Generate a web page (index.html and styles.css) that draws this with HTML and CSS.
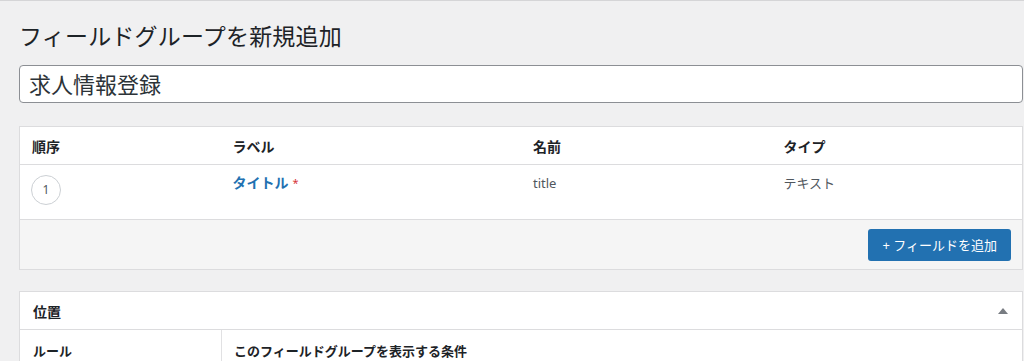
FILE: index.html
```html
<html>
    <head>
        <meta charset="utf-8">
        <link rel="stylesheet" href="styles.css">
    </head>

    <body>
        <div id="wrap">
            <h1 class="page-title">フィールドグループを新規追加</h1>

            <!-- タイトル入力 -->
            <div class="title-input">求人情報登録</div>

            <!-- フィールド一覧 -->
            <div class="fields-box">
                <div class="fields-row fields-head">
                    <div class="cell">順序</div>
                    <div class="cell">ラベル</div>
                    <div class="cell">名前</div>
                    <div class="cell">タイプ</div>
                </div>
                <div class="fields-row fields-item">
                    <div class="cell"><span class="order-num">1</span></div>
                    <div class="cell"><a class="field-label">タイトル</a><span class="required">*</span></div>
                    <div class="cell field-meta">title</div>
                    <div class="cell field-meta">テキスト</div>
                </div>
                <div class="fields-foot">
                    <span class="button-primary">+ フィールドを追加</span>
                </div>
            </div>

            <!-- 位置 -->
            <div class="postbox">
                <div class="postbox-head">
                    <span>位置</span>
                    <span class="toggle-arrow"></span>
                </div>
                <div class="rule-row">
                    <div class="rule-label">ルール</div>
                    <div class="rule-body">このフィールドグループを表示する条件</div>
                </div>
            </div>
        </div>
    </body>
</html>
```

FILE: styles.css
```css
body {
    margin		: 0;
    background	: #f0f0f1;
    border-top	: 1px solid #d5d5d7;
    font-family	: "Noto Sans", "Noto Sans CJK JP", sans-serif;
    color		: #1d2327;
    overflow	: hidden;
}
#wrap {
    padding		: 0 1px 0 19px;
}
.page-title {
    margin		: 0;
    padding-top	: 20px;
    font-size	: 23px;
    font-weight	: 400;
    line-height	: 30px;
    letter-spacing	: 0.2px;
    color		: #1d2327;
}
.title-input {
    margin-top	: 14px;
    height		: 36px;
    padding		: 0 9px;
    border		: 1px solid #8c8f94;
    border-radius	: 4px;
    background	: #fff;
    font-size	: 22px;
    line-height	: 36px;
    color		: #2c3338;
}

/* fields table */
.fields-box {
    margin-top	: 23px;
    border		: 1px solid #dcdcde;
    background	: #fff;
}
.fields-row {
    display		: grid;
    grid-template-columns	: 20% 30% 25% 25%;
    border-bottom	: 1px solid #dcdcde;
}
.cell {
    padding		: 0 12px;
}
.fields-head {
    height		: 37px;
    align-items	: center;
    font-size	: 14px;
    font-weight	: 700;
}
.fields-item {
    height		: 54px;
    font-size	: 14px;
}
.fields-item .cell {
    padding-top	: 8px;
    line-height	: 20px;
}
.order-num {
    display		: block;
    width		: 28px;
    height		: 28px;
    margin		: 2px 0 0 -1px;
    border		: 1px solid #ccd0d4;
    border-radius	: 50%;
    text-align	: center;
    line-height	: 28px;
    font-size	: 12px;
    color		: #50575e;
}
.field-label {
    color		: #2271b1;
    font-weight	: 700;
}
.required {
    margin-left	: 4px;
    color		: #d63638;
    font-size	: 11px;
    vertical-align	: top;
}
.field-meta {
    font-size	: 13px;
    color		: #50575e;
}
.fields-foot {
    height		: 49px;
    display		: flex;
    justify-content	: flex-end;
    align-items	: center;
    padding		: 0 11px;
    background	: #f5f5f5;
}
.button-primary {
    display		: inline-block;
    height		: 32px;
    padding		: 0 14px;
    border-radius	: 3px;
    background	: #2271b1;
    color		: #fff;
    font-size	: 13px;
    line-height	: 32px;
}

/* location box */
.postbox {
    margin-top	: 21px;
    border		: 1px solid #dcdcde;
    border-bottom	: 0;
    background	: #fff;
}
.postbox-head {
    height		: 37px;
    display		: flex;
    justify-content	: space-between;
    align-items	: center;
    padding		: 0 14px 0 13px;
    border-bottom	: 1px solid #dcdcde;
    font-size	: 14px;
    font-weight	: 700;
}
.toggle-arrow {
    width		: 0;
    height		: 0;
    border-left	: 5px solid transparent;
    border-right	: 5px solid transparent;
    border-bottom	: 6px solid #787c82;
}
.rule-row {
    display		: flex;
    height		: 31px;
}
.rule-label {
    width		: 188px;
    padding		: 13px 0 0 13px;
    border-right	: 1px solid #e1e1e3;
    font-size	: 13px;
    line-height	: 17px;
    font-weight	: 700;
}
.rule-body {
    padding		: 13px 12px 0;
    font-size	: 13px;
    line-height	: 17px;
    font-weight	: 700;
}
```
